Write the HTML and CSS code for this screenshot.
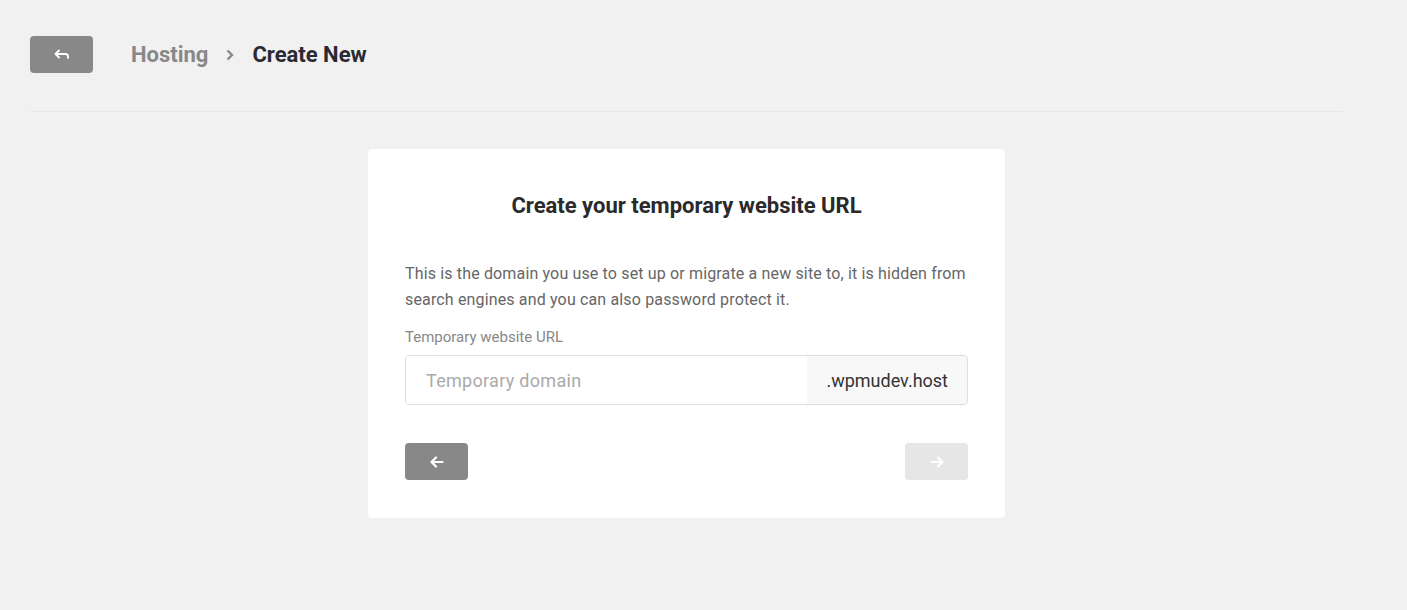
FILE: index.html
```html
<!DOCTYPE html>
<html lang="en">

<head>
    <meta charset="UTF-8">
    <title>Hosting - Create New</title>
    <link rel="stylesheet" href="styles.css">
</head>

<body>
    <div class="page">
        <header class="header">
            <button class="btn btn-grey btn-back" type="button" aria-label="Back">
                <svg width="16" height="12" viewBox="0 0 16 12">
                    <path d="M5 1.5 1.5 5 5 8.5M1.5 5h10a2.5 2.5 0 0 1 2.5 2.5V9" fill="none" stroke="#fff" stroke-width="1.8" stroke-linecap="round" stroke-linejoin="round" />
                </svg>
            </button>
            <nav class="breadcrumb">
                <span class="crumb">Hosting</span>
                <svg class="crumb-sep" width="10" height="14" viewBox="0 0 10 14">
                    <path d="M2.5 2.5 7 7l-4.5 4.5" fill="none" stroke="#888" stroke-width="2.4" />
                </svg>
                <span class="crumb current">Create New</span>
            </nav>
        </header>

        <main class="main">
            <div class="card">
                <h2 class="card-title">Create your temporary website URL</h2>
                <p class="description">
                    This is the domain you use to set up or migrate a new site to, it is hidden from
                    search engines and you can also password protect it.
                </p>
                <label class="label" for="domain">Temporary website URL</label>
                <div class="input-group">
                    <input type="text" id="domain" placeholder="Temporary domain">
                    <span class="suffix">.wpmudev.host</span>
                </div>
                <div class="actions">
                    <button class="btn btn-grey" type="button" aria-label="Previous">
                        <svg width="14" height="12" viewBox="0 0 14 12">
                            <path d="M6 1.5 1.5 6 6 10.5M1.5 6h11" fill="none" stroke="#fff" stroke-width="2.2" stroke-linecap="round" stroke-linejoin="round" />
                        </svg>
                    </button>
                    <button class="btn btn-disabled" type="button" aria-label="Next" disabled>
                        <svg width="14" height="12" viewBox="0 0 14 12">
                            <path d="M8 1.5 12.5 6 8 10.5M12.5 6h-11" fill="none" stroke="#fff" stroke-width="2.2" stroke-linecap="round" stroke-linejoin="round" />
                        </svg>
                    </button>
                </div>
            </div>
        </main>
    </div>
</body>

</html>
```

FILE: styles.css
```css
body {
    font-family: Roboto, "Liberation Sans", Arial, sans-serif;
    margin: 0;
    background-color: #f1f1f1;
    color: #333;
}

.page {
    width: 1313px;
    padding: 36px 30px 0;
}

.header {
    display: flex;
    align-items: center;
    gap: 38px;
    padding-bottom: 38px;
    border-bottom: 1px solid #e6e6e6;
}

.btn {
    display: flex;
    align-items: center;
    justify-content: center;
    width: 63px;
    height: 37px;
    padding: 0;
    border: none;
    border-radius: 4px;
    cursor: pointer;
}

.btn-grey {
    background-color: #888;
}

.btn-grey:hover {
    background-color: #7a7a7a;
}

.btn-disabled {
    background-color: #e6e6e6;
    cursor: default;
}

.breadcrumb {
    display: flex;
    align-items: center;
    gap: 17px;
}

.crumb {
    font-size: 22px;
    font-weight: 700;
    color: #888;
}

.crumb.current {
    color: #2a2a33;
}

.crumb-sep {
    margin-top: 1px;
}

.main {
    display: flex;
    justify-content: center;
    padding-top: 37px;
}

.card {
    width: 563px;
    padding: 43px 37px 38px;
    background-color: #fff;
    border-radius: 4px;
}

.card-title {
    margin: 0 0 41px;
    text-align: center;
    font-size: 22px;
    line-height: 28px;
    font-weight: 700;
    color: #2a2a2a;
}

.description {
    margin: 0 0 15px;
    font-size: 16px;
    line-height: 26px;
    letter-spacing: 0.15px;
    color: #666;
}

.label {
    display: block;
    margin-bottom: 9px;
    font-size: 15px;
    line-height: 18px;
    color: #888;
}

.input-group {
    display: flex;
    height: 50px;
    border: 1px solid #ddd;
    border-radius: 4px;
    overflow: hidden;
    box-sizing: border-box;
}

.input-group input {
    flex: 1;
    min-width: 0;
    padding: 0 20px;
    border: none;
    outline: none;
    font-family: inherit;
    font-size: 18px;
    letter-spacing: 0.3px;
    color: #333;
}

.input-group input::placeholder {
    color: #aaa;
}

.suffix {
    display: flex;
    align-items: center;
    padding: 0 19px;
    background-color: #f8f8f8;
    font-size: 18px;
    color: #333;
}

.actions {
    display: flex;
    justify-content: space-between;
    margin-top: 38px;
}
```
